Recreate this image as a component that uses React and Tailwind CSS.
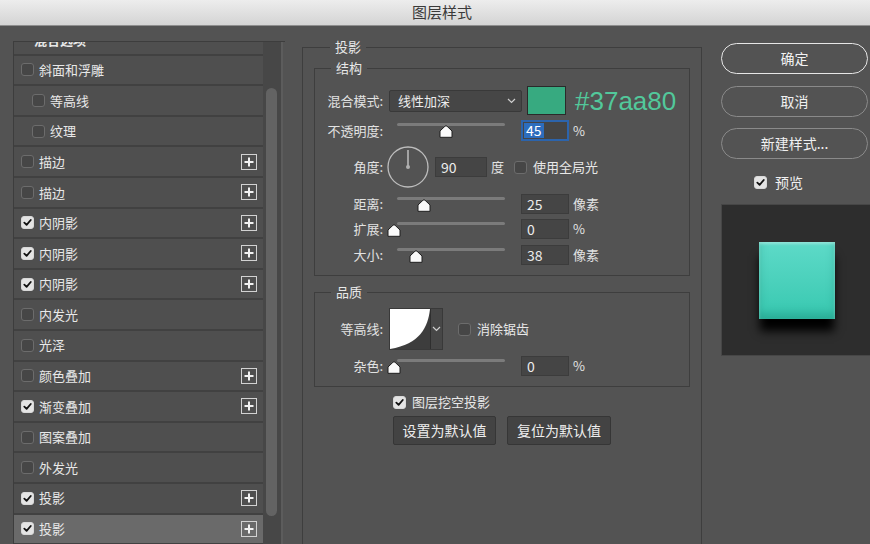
import React from "react";

const FONT = { fontFamily: '"Noto Sans CJK SC", "Noto Sans", sans-serif' };

const effects = [
  { t: "斜面和浮雕" },
  { t: "等高线", indent: true },
  { t: "纹理", indent: true },
  { t: "描边", plus: true },
  { t: "描边", plus: true },
  { t: "内阴影", on: true, plus: true },
  { t: "内阴影", on: true, plus: true },
  { t: "内阴影", on: true, plus: true },
  { t: "内发光" },
  { t: "光泽" },
  { t: "颜色叠加", plus: true },
  { t: "渐变叠加", on: true, plus: true },
  { t: "图案叠加" },
  { t: "外发光" },
  { t: "投影", on: true, plus: true },
  { t: "投影", on: true, plus: true, active: true },
];

function Check({ on }) {
  return (
    <span
      className={
        "flex h-[13px] w-[13px] shrink-0 items-center justify-center rounded-[3px] border " +
        (on ? "border-[#d8d8d8] bg-[#e4e4e4]" : "border-[#6c6c6c] bg-[#464646]")
      }
    >
      {on && (
        <svg width="9" height="9" viewBox="0 0 10 10">
          <path d="M1.5 5.2 L4 7.6 L8.6 2.2" fill="none" stroke="#111" strokeWidth="2" strokeLinecap="round" strokeLinejoin="round" />
        </svg>
      )}
    </span>
  );
}

function PlusBox() {
  return (
    <span className="ml-auto flex h-[16px] w-[16px] items-center justify-center border border-[#d2d2d2]">
      <svg width="10" height="10" viewBox="0 0 10 10">
        <path d="M5 0.5 V9.5 M0.5 5 H9.5" stroke="#f2f2f2" strokeWidth="2" />
      </svg>
    </span>
  );
}

function Thumb() {
  return (
    <svg width="14" height="13" viewBox="0 0 14 13">
      <path d="M6 1.2 Q7 0.3 8 1.2 L13 6 V12.3 H1 V6 Z" fill="#fafafa" stroke="#1e1e1e" strokeWidth="1" strokeLinejoin="round" />
    </svg>
  );
}

function Slider({ value }) {
  // track 397..505, thumb centre taken from value 0..100
  const left = 1 + (value / 100) * 108;
  return (
    <div className="relative h-full w-[132px] shrink-0">
      <div className="absolute left-[8px] right-[16px] top-[3px] h-[3px] rounded-full bg-[#7b7b7b]" />
      <div className="absolute top-[5px]" style={{ left: left + "px" }}>
        <Thumb />
      </div>
    </div>
  );
}

function NumBox({ v, w = "w-[48px]" }) {
  return (
    <div className={"flex h-[20px] items-center border border-[#3c3c3c] bg-[#454545] pl-[5px] text-[14px] text-[#ececec] " + w}>
      {v}
    </div>
  );
}

function Label({ children }) {
  return <div className="w-[69px] shrink-0 pr-[1px] text-right text-[13px] text-[#e2e2e2]">{children}</div>;
}

function SliderRow({ label, value, v, unit, mt }) {
  return (
    <div className={"flex h-[20px] items-center " + mt}>
      <Label>{label}</Label>
      <div className="ml-[5px] flex h-full items-center">
        <Slider value={value} />
        <NumBox v={v} />
        <span className="ml-[4px] text-[13px] text-[#e2e2e2]">{unit}</span>
      </div>
    </div>
  );
}

function Chevron() {
  return (
    <svg width="9" height="6" viewBox="0 0 9 6">
      <path d="M1 1 L4.5 4.5 L8 1" fill="none" stroke="#cfcfcf" strokeWidth="1.2" />
    </svg>
  );
}

export default function App() {
  return (
    <div className="flex h-[544px] w-[870px] flex-col overflow-hidden bg-[#535353] text-[#e4e4e4]" style={FONT}>
      <div className="flex h-[26px] shrink-0 items-center justify-center border-b border-[#8e8e8e] bg-gradient-to-b from-[#ededed] to-[#d4d4d4] pl-[14px] text-[15px] text-[#3a3a3a]">
        图层样式
      </div>

      <div className="flex flex-1">
        {/* effects list */}
        <div className="ml-[13px] mt-[15px] flex h-[560px] w-[272px] shrink-0 border-l border-t border-[#3d3d3d]">
          <div className="w-[249px] overflow-hidden">
            <div className="mt-[-17px]">
              <div className="flex h-[30.6px] items-center border-b-2 border-[#414141] bg-[#4f4f4f] pl-[20px] text-[13px] font-bold text-[#e8e8e8]">
                混合选项
              </div>
              {effects.map((e, i) => (
                <div
                  key={i}
                  className={
                    "flex h-[30.6px] items-center border-b-2 border-[#414141] pr-[6px] text-[13px] " +
                    (e.indent ? "pl-[18px] " : "pl-[7px] ") +
                    (e.active ? "bg-[#6a6a6a]" : "bg-[#4f4f4f]")
                  }
                >
                  <Check on={e.on} />
                  <span className="ml-[5px] text-[#e8e8e8]">{e.t}</span>
                  {e.plus && <PlusBox />}
                </div>
              ))}
            </div>
          </div>
          <div className="flex w-[20px] justify-center border-r-2 border-[#5c5c5c] bg-[#474747] pr-[2px]">
            <div className="mt-[46px] h-[428px] w-[11px] rounded-full bg-[#636363]" />
          </div>
        </div>

        {/* drop shadow settings */}
        <fieldset className="ml-[17px] mt-[12px] h-[540px] w-[400px] shrink-0 border border-[#3e3e3e] px-[11px]">
          <legend className="ml-[16px] px-[5px] text-[13px] leading-[18px] text-[#e8e8e8]">投影</legend>

          <fieldset className="mt-[3px] border border-[#3e3e3e] pb-[10px] pt-[9px]">
            <legend className="ml-[16px] px-[5px] text-[13px] leading-[18px] text-[#e8e8e8]">结构</legend>

            <div className="flex h-[29px] items-center">
              <Label>混合模式:</Label>
              <div className="ml-[5px] flex h-[22px] w-[133px] items-center justify-between rounded-[2px] border border-[#393939] bg-[#464646] pl-[8px] pr-[5px] text-[13px] text-[#ececec]">
                线性加深
                <Chevron />
              </div>
              <div className="ml-[5px] h-[29px] w-[39px] border border-[#2a2a2a] bg-[#37aa80]" />
              <span className="ml-[9px] text-[26px] leading-none text-[#52c89b]" style={{ fontFamily: '"Liberation Sans", Arial, sans-serif' }}>
                #37aa80
              </span>
            </div>

            <div className="mt-[5px] flex h-[21px] items-center">
              <Label>不透明度:</Label>
              <div className="ml-[5px] flex h-full items-center">
                <Slider value={45} />
                <div className="flex h-[21px] w-[48px] items-center border-2 border-[#2c64ac] bg-[#454545] pl-[1px] text-[14px] text-white">
                  <span className="bg-[#2d6dbd] px-[2px] leading-[15px]">45</span>
                </div>
                <span className="ml-[4px] text-[13px] text-[#e2e2e2]">%</span>
              </div>
            </div>

            <div className="mt-[5px] flex h-[42px] items-center">
              <Label>角度:</Label>
              <svg className="ml-[3px]" width="42" height="42" viewBox="0 0 42 42">
                <circle cx="21" cy="21" r="20" fill="none" stroke="#bdbdbd" strokeWidth="1.3" />
                <path d="M21 21 V4" stroke="#d0d0d0" strokeWidth="1.3" />
                <circle cx="21" cy="21" r="2" fill="#b0b0b0" />
              </svg>
              <div className="ml-[6px]">
                <NumBox v="90" w="w-[52px]" />
              </div>
              <span className="ml-[4px] text-[13px] text-[#e2e2e2]">度</span>
              <span className="ml-[10px]">
                <Check />
              </span>
              <span className="ml-[6px] text-[13px] text-[#e8e8e8]">使用全局光</span>
            </div>

            <SliderRow label="距离:" value={25} v="25" unit="像素" mt="mt-[6px]" />
            <SliderRow label="扩展:" value={-3} v="0" unit="%" mt="mt-[5px]" />
            <SliderRow label="大小:" value={18} v="38" unit="像素" mt="mt-[6px]" />
          </fieldset>

          <fieldset className="mt-[7px] border border-[#3e3e3e] pb-[10px] pt-[7px]">
            <legend className="ml-[16px] px-[5px] text-[13px] leading-[18px] text-[#e8e8e8]">品质</legend>

            <div className="flex h-[42px] items-center">
              <Label>等高线:</Label>
              <div className="ml-[5px] flex h-[42px] w-[54px] border border-[#393939] bg-[#3d3d3d]">
                <svg width="40" height="40" viewBox="0 0 40 40" className="shrink-0">
                  <path d="M0 0 H40 C38 18 30 35 0 40 Z" fill="#ffffff" />
                </svg>
                <div className="flex flex-1 items-center justify-center border-l border-[#2f2f2f] bg-[#474747]">
                  <Chevron />
                </div>
              </div>
              <span className="ml-[15px]">
                <Check />
              </span>
              <span className="ml-[6px] text-[13px] text-[#e8e8e8]">消除锯齿</span>
            </div>

            <SliderRow label="杂色:" value={-3} v="0" unit="%" mt="mt-[6px]" />
          </fieldset>

          <div className="ml-[79px] mt-[8px] flex h-[14px] items-center">
            <Check on />
            <span className="ml-[6px] text-[13px] text-[#e8e8e8]">图层挖空投影</span>
          </div>

          <div className="ml-[79px] mt-[7px] flex gap-[11px]">
            <div className="flex h-[29px] w-[103px] items-center justify-center rounded-[2px] border border-[#363636] bg-[#434343] text-[14px] text-[#eeeeee]">
              设置为默认值
            </div>
            <div className="flex h-[29px] w-[104px] items-center justify-center rounded-[2px] border border-[#363636] bg-[#434343] text-[14px] text-[#eeeeee]">
              复位为默认值
            </div>
          </div>
        </fieldset>

        {/* buttons + preview */}
        <div className="ml-[19px] mt-[17px] flex w-[160px] shrink-0 flex-col">
          <div className="flex h-[31px] w-[147px] items-center justify-center rounded-full border-[1.5px] border-[#e6e6e6] text-[14px] text-[#f2f2f2]">
            确定
          </div>
          <div className="mt-[12px] flex h-[31px] w-[147px] items-center justify-center rounded-full border border-[#8a8a8a] text-[14px] text-[#f0f0f0]">
            取消
          </div>
          <div className="mt-[11px] flex h-[31px] w-[147px] items-center justify-center rounded-full border border-[#8a8a8a] text-[14px] text-[#f0f0f0]">
            新建样式...
          </div>
          <div className="ml-[33px] mt-[16px] flex h-[14px] items-center">
            <Check on />
            <span className="ml-[8px] text-[14px] text-[#f0f0f0]">预览</span>
          </div>
          <div className="mt-[15px] h-[152px] w-[160px] border border-[#464646] bg-[#2d2d2d] pl-[37px] pt-[37px]">
            <div className="h-[77px] w-[76px] bg-gradient-to-b from-[#5ddac8] to-[#36c8b0] shadow-[inset_0_2px_3px_rgba(255,255,255,0.35),inset_0_-6px_8px_rgba(20,120,100,0.35),0_13px_9px_-1px_rgba(0,0,0,1)]" />
          </div>
        </div>
      </div>
    </div>
  );
}
